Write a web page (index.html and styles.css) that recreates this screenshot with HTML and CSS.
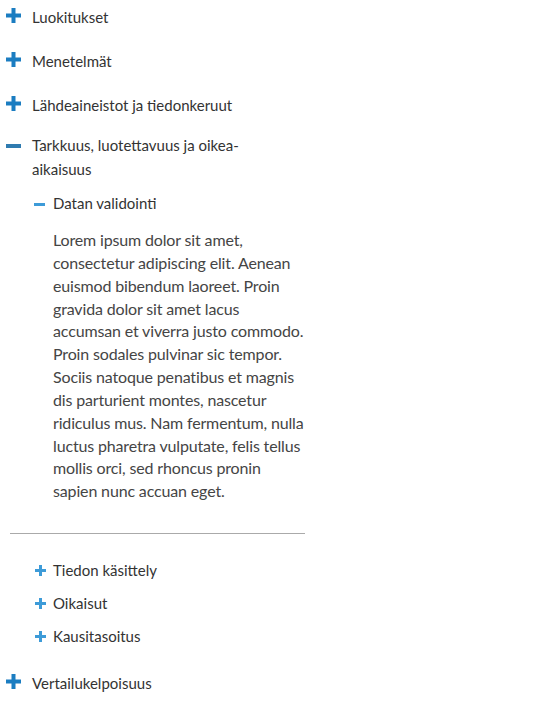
FILE: index.html
```html
<!DOCTYPE html>
<html lang="fi">
<head>
<meta charset="utf-8">
<title>Laatuseloste</title>
<link rel="stylesheet" href="styles.css">
</head>
<body>
<ul class="tree">
  <li class="item">
    <div class="head">
      <svg class="icon big plus" width="15" height="15" viewBox="0 0 15 15"><rect x="0" y="5.5" width="15" height="4"/><rect x="5.5" y="0" width="4" height="15"/></svg>
      <span class="label">Luokitukset</span>
    </div>
  </li>
  <li class="item">
    <div class="head">
      <svg class="icon big plus" width="15" height="15" viewBox="0 0 15 15"><rect x="0" y="5.5" width="15" height="4"/><rect x="5.5" y="0" width="4" height="15"/></svg>
      <span class="label">Menetelmät</span>
    </div>
  </li>
  <li class="item">
    <div class="head">
      <svg class="icon big plus" width="15" height="15" viewBox="0 0 15 15"><rect x="0" y="5.5" width="15" height="4"/><rect x="5.5" y="0" width="4" height="15"/></svg>
      <span class="label">Lähdeaineistot ja tiedonkeruut</span>
    </div>
  </li>
  <li class="item open">
    <div class="head">
      <svg class="icon big minus" width="15" height="4" viewBox="0 0 15 4"><rect x="0" y="0" width="15" height="4"/></svg>
      <span class="label">Tarkkuus, luotettavuus ja oikea-aikaisuus</span>
    </div>
    <ul class="sub">
      <li class="subitem open">
        <div class="subhead">
          <svg class="icon small minus" width="11" height="3" viewBox="0 0 11 3"><rect x="0" y="0" width="11" height="3"/></svg>
          <span class="sublabel">Datan validointi</span>
        </div>
        <p class="body">Lorem ipsum dolor sit amet,<br>
consectetur adipiscing elit. Aenean<br>
euismod bibendum laoreet. Proin<br>
gravida dolor sit amet lacus<br>
accumsan et viverra justo commodo.<br>
Proin sodales pulvinar sic tempor.<br>
Sociis natoque penatibus et magnis<br>
dis parturient montes, nascetur<br>
ridiculus mus. Nam fermentum, nulla<br>
luctus pharetra vulputate, felis tellus<br>
mollis orci, sed rhoncus pronin<br>
sapien nunc accuan eget.</p>
      </li>
    </ul>
    <hr class="divider">
    <ul class="sub closed-list">
      <li class="subitem">
        <div class="subhead">
          <svg class="icon small plus" width="11" height="11" viewBox="0 0 11 11"><rect x="0" y="4" width="11" height="3"/><rect x="4" y="0" width="3" height="11"/></svg>
          <span class="sublabel">Tiedon käsittely</span>
        </div>
      </li>
      <li class="subitem">
        <div class="subhead">
          <svg class="icon small plus" width="11" height="11" viewBox="0 0 11 11"><rect x="0" y="4" width="11" height="3"/><rect x="4" y="0" width="3" height="11"/></svg>
          <span class="sublabel">Oikaisut</span>
        </div>
      </li>
      <li class="subitem">
        <div class="subhead">
          <svg class="icon small plus" width="11" height="11" viewBox="0 0 11 11"><rect x="0" y="4" width="11" height="3"/><rect x="4" y="0" width="3" height="11"/></svg>
          <span class="sublabel">Kausitasoitus</span>
        </div>
      </li>
    </ul>
  </li>
  <li class="item last">
    <div class="head">
      <svg class="icon big plus" width="15" height="15" viewBox="0 0 15 15"><rect x="0" y="5.5" width="15" height="4"/><rect x="5.5" y="0" width="4" height="15"/></svg>
      <span class="label">Vertailukelpoisuus</span>
    </div>
  </li>
</ul>
</body>
</html>
```

FILE: styles.css
```css
html, body {
  margin: 0;
  padding: 0;
  background: #ffffff;
}

body {
  font-family: Lato, "Open Sans", sans-serif;
  color: #333333;
}

.tree {
  list-style: none;
  margin: 0;
  padding: 5px 0 0 0;
  width: 305px;
}

.item + .item {
  margin-top: 20px;
}

.item.open {
  margin-top: 16px;
}

.item.last {
  margin-top: 23px;
}

.head {
  display: flex;
  align-items: flex-start;
  padding: 0 40px 0 6px;
  font-size: 15px;
  line-height: 24px;
}

.icon {
  flex: none;
}

.icon.big.plus {
  fill: #1b7dc1;
  margin-top: 3px;
  margin-right: 11px;
}

.icon.big.minus {
  fill: #2f7bb0;
  margin-top: 11px;
  margin-right: 11px;
}

.label {
  flex: 1;
  min-width: 0;
}

.sub {
  list-style: none;
  margin: 0;
  padding: 0;
}

.sub > .subitem:first-child {
  margin-top: 11px;
}

.closed-list > .subitem:first-child {
  margin-top: 25px;
}

.subitem + .subitem {
  margin-top: 10px;
}

.subhead {
  display: flex;
  align-items: flex-start;
  padding-left: 34px;
  font-size: 15px;
  line-height: 23px;
}

.icon.small {
  fill: #3d9bd8;
}

.icon.small.minus {
  margin-top: 11px;
  margin-right: 8px;
}

.icon.small.plus {
  margin-top: 6px;
  margin-left: 1px;
  margin-right: 7px;
}

.body {
  margin: 14px -20px 0 53px;
  font-size: 16px;
  line-height: 1.428571;
  letter-spacing: -0.15px;
  color: #454545;
}

.divider {
  margin: 30px 0 0 10px;
  border: 0;
  border-top: 1px solid #aaaaaa;
  height: 0;
}
```
